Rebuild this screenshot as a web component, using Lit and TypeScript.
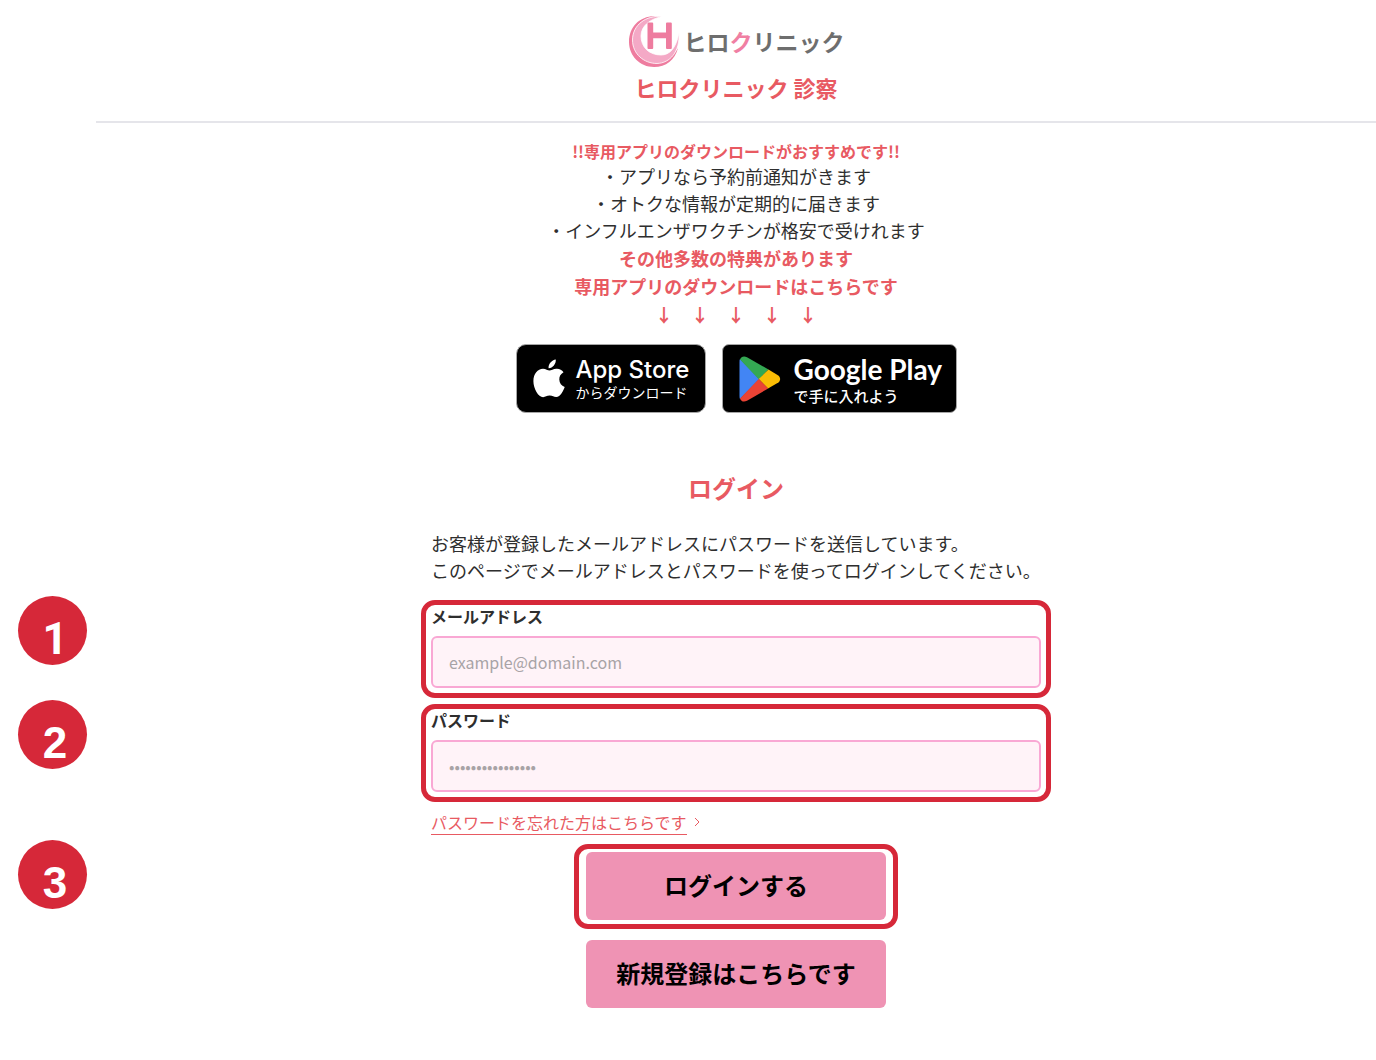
import { LitElement, html, css } from "lit";
import { customElement, property } from "lit/decorators.js";

const benefits = [
  "・アプリなら予約前通知がきます",
  "・オトクな情報が定期的に届きます",
  "・インフルエンザワクチンが格安で受けれます",
];

@customElement("clinic-logo")
export class ClinicLogo extends LitElement {
  static styles = css`
    :host {
      display: flex;
      align-items: center;
      justify-content: center;
      gap: 4px;
      color: #6e6e6e;
      font-size: 23px;
      font-weight: 700;
      line-height: 51px;
    }
    .mark {
      display: block;
      width: 52px;
      height: 51px;
    }
    .accent {
      color: #f07fa3;
    }
  `;

  render() {
    return html`
      <svg class="mark" viewBox="0 0 52 51" aria-hidden="true">
        <path
          fill="#ee7c9f"
          d="M29 0.500C13 -1 1 10 1 26C1 40 12 51 26 51C38 51 47 44 50 32C43 43 33 47 24 45C12 43 6 34 6 22C6 12 14 2 29 0.500Z"
        />
        <path
          fill="#f4a9c6"
          stroke="#fff"
          stroke-width="0.8"
          d="M34 0.500C18 -1 4.500 9 4.500 24C4.500 38 16 47.500 29 47.500C42 47 52 36 51 17C48 32 42 39 33 39C21 39 13 31 13 20C13 10 22 3 34 0.500Z"
        />
        <path
          fill="#ee7c9f"
          d="M20.500 6.500H24.200Q25.200 6.500 25.200 7.500V16.500H38V7.500Q38 6.500 39 6.500H42.800Q43.800 6.500 43.800 7.500V32Q43.800 33 42.800 33H39Q38 33 38 32V22.300H25.200V32Q25.200 33 24.200 33H20.500Q19.500 33 19.500 32V7.500Q19.500 6.500 20.500 6.500Z"
        />
      </svg>
      <span>ヒロ<span class="accent">ク</span>リニック</span>
    `;
  }
}

@customElement("step-marker")
export class StepMarker extends LitElement {
  static styles = css`
    :host {
      position: absolute;
      left: 18px;
      top: -4px;
      box-sizing: border-box;
      width: 69px;
      height: 69px;
      padding: 16px 0 0 5px;
      border-radius: 50%;
      background: #d62839;
      color: #fff;
      font: 700 44px/54px "Liberation Sans", Arial, sans-serif;
      text-align: center;
    }
    .plain-one {
      font-family: Roboto, sans-serif;
    }
  `;

  @property({ type: Number }) step = 1;

  render() {
    return html`<span class=${this.step === 1 ? "plain-one" : ""}>${this.step}</span>`;
  }
}

@customElement("app-root")
export class AppRoot extends LitElement {
  static styles = css`
    :host {
      display: block;
      min-height: 100vh;
      background: #fff;
      color: #2e2e2e;
      font-family: "Noto Sans CJK JP", sans-serif;
      font-size: 18px;
      line-height: 27px;
    }
    * {
      box-sizing: border-box;
    }
    h1,
    h2,
    p,
    ul {
      margin: 0;
      padding: 0;
    }
    .header {
      margin-left: 96px;
      padding: 16px 0 17px;
      border-bottom: 2px solid #e5e5ea;
      text-align: center;
    }
    .title {
      margin-top: 4px;
      color: #e85a62;
      font-size: 22px;
      line-height: 33px;
    }
    .promo {
      display: flex;
      flex-direction: column;
      align-items: center;
      margin-left: 96px;
      padding-top: 16px;
    }
    .lead,
    .strong {
      color: #e85a62;
      font-weight: 700;
    }
    .lead {
      font-size: 16px;
      line-height: 24px;
    }
    .strong {
      line-height: 28px;
    }
    .benefits {
      list-style: none;
      text-align: center;
    }
    .badges {
      display: flex;
      gap: 16px;
      margin-top: 16px;
    }
    .badge {
      display: flex;
      align-items: center;
      height: 69px;
      border: 1px solid #a6a6a6;
      border-radius: 10px;
      background: #000;
      color: #fff;
      text-decoration: none;
      white-space: nowrap;
    }
    .apple {
      gap: 11px;
      width: 190px;
      padding-left: 16px;
    }
    .google {
      gap: 13px;
      width: 235px;
      padding-left: 16px;
      border-radius: 7px;
    }
    .badge-text {
      display: flex;
      flex-direction: column;
    }
    .store {
      font: 500 24px/26px Inter, sans-serif;
    }
    .play {
      padding-top: 4px;
      font: 700 28px/30px Lato, sans-serif;
    }
    .sub {
      font-size: 14px;
      line-height: 18px;
    }
    .sub-strong {
      font-size: 15px;
      font-weight: 500;
      line-height: 24px;
    }
    .login {
      margin-top: 57px;
      padding-bottom: 52px;
    }
    .login-title {
      margin-left: 96px;
      color: #e85a62;
      font-size: 24px;
      line-height: 36px;
      text-align: center;
    }
    .row {
      position: relative;
      display: flex;
      justify-content: center;
      padding-left: 96px;
    }
    .intro,
    .link-row {
      width: 630px;
      padding-left: 10px;
    }
    .intro {
      margin: 24px 0 16px;
    }
    .field {
      display: flex;
      flex-direction: column;
      gap: 9px;
      width: 630px;
      margin-bottom: 6px;
      padding: 0 5px 5px;
      border: 5px solid #d62839;
      border-radius: 14px;
    }
    .label {
      font-size: 16px;
      font-weight: 700;
      line-height: 22px;
    }
    .input {
      width: 100%;
      height: 52px;
      padding: 0 16px;
      border: 2px solid #f9a8d4;
      border-radius: 6px;
      background: #fff3f8;
      color: #2e2e2e;
      font-family: inherit;
      font-size: 16px;
    }
    .input::placeholder {
      color: #a8a3a6;
      opacity: 1;
    }
    .link-row {
      display: flex;
      align-items: center;
      gap: 7px;
      margin: 3px 0 9px;
    }
    .forgot {
      padding-bottom: 1px;
      border-bottom: 1px solid #e85a62;
      color: #e85a62;
      font-size: 16px;
      line-height: 22px;
      text-decoration: none;
    }
    .chevron {
      display: block;
      margin-bottom: 2px;
    }
    .ring {
      padding: 3px 7px 4px;
      border: 5px solid #d62839;
      border-radius: 14px;
    }
    .button {
      display: block;
      width: 300px;
      height: 68px;
      padding: 0 0 2px;
      border: 0;
      border-radius: 6px;
      background: #ef93b4;
      color: #000;
      font-family: inherit;
      font-size: 24px;
      font-weight: 700;
      line-height: 66px;
      text-align: center;
      cursor: pointer;
    }
    .register {
      margin-top: 11px;
    }
  `;

  render() {
    return html`
      <header class="header">
        <clinic-logo></clinic-logo>
        <h1 class="title">ヒロクリニック 診察</h1>
      </header>

      <section class="promo">
        <p class="lead">!!専用アプリのダウンロードがおすすめです!!</p>
        <ul class="benefits">
          ${benefits.map((text) => html`<li>${text}</li>`)}
        </ul>
        <p class="strong">その他多数の特典があります</p>
        <p class="strong">専用アプリのダウンロードはこちらです</p>
        <p class="strong">↓　↓　↓　↓　↓</p>
        <div class="badges">
          <a class="badge apple" href="#app-store">
            <svg width="32" height="39" viewBox="0 0 32 39" aria-hidden="true">
              <path
                fill="#fff"
                d="M22.800 0.500C23.200 4.800 19.700 9.300 15.600 9.200C15.100 5.100 18.800 1 22.800 0.500ZM30.500 13.200C27.700 14.900 26.200 17.300 26.300 20.400C26.400 24 28.500 26.700 31.700 27.900C30.800 30.900 27.300 37.900 23.300 38.100C20.800 38.200 19.800 36.600 16.700 36.600C13.600 36.600 12.500 38.100 10.100 38.200C5.400 38.200 0.400 29.600 0.400 22.200C0.400 14.700 4.800 9.900 10 9.800C12.700 9.800 14.800 11.600 16.500 11.600C18.200 11.600 20.600 9.500 24 9.700C26.700 9.900 29 11 30.500 13.200Z"
              />
            </svg>
            <span class="badge-text">
              <span class="store">App Store</span>
              <span class="sub">からダウンロード</span>
            </span>
          </a>
          <a class="badge google" href="#google-play">
            <svg width="42" height="46" viewBox="0 0 42 46" aria-hidden="true">
              <path fill="#4285f4" d="M1 3L20.500 23L1 43C0.500 42 0.500 41 0.500 40V6C0.500 5 0.500 4 1 3Z" />
              <path fill="#34a853" d="M1 3.500C2 0.500 5 -0.300 8 1.200L29.500 13.600L20 23.500Z" />
              <path fill="#fbbc04" d="M29.500 13.600L38.500 18.900C42 21 42 25 38.500 27.100L29 32.600L19.700 23Z" />
              <path fill="#ea4335" d="M1 42.500C2 45.700 5 46.300 8 44.800L29.200 32.500L19.800 22.900Z" />
            </svg>
            <span class="badge-text">
              <span class="play">Google Play</span>
              <span class="sub-strong">で手に入れよう</span>
            </span>
          </a>
        </div>
      </section>

      <form class="login" @submit=${(e: Event) => e.preventDefault()}>
        <h2 class="login-title">ログイン</h2>
        <div class="row">
          <p class="intro">
            お客様が登録したメールアドレスにパスワードを送信しています。<br />
            このページでメールアドレスとパスワードを使ってログインしてください。
          </p>
        </div>
        <div class="row">
          <step-marker .step=${1}></step-marker>
          <div class="field">
            <label class="label" for="email">メールアドレス</label>
            <input class="input" id="email" type="email" placeholder="example@domain.com" />
          </div>
        </div>
        <div class="row">
          <step-marker .step=${2}></step-marker>
          <div class="field">
            <label class="label" for="password">パスワード</label>
            <input class="input" id="password" type="password" placeholder="••••••••••••••••" />
          </div>
        </div>
        <div class="row">
          <div class="link-row">
            <a class="forgot" href="#forgot">パスワードを忘れた方はこちらです</a>
            <svg class="chevron" width="6" height="10" viewBox="0 0 6 10" aria-hidden="true">
              <path d="M1 1L5 5L1 9" fill="none" stroke="#e85a62" />
            </svg>
          </div>
        </div>
        <div class="row">
          <step-marker .step=${3}></step-marker>
          <div class="ring">
            <button class="button" type="submit">ログインする</button>
          </div>
        </div>
        <div class="row">
          <button class="button register" type="button">新規登録はこちらです</button>
        </div>
      </form>
    `;
  }
}
